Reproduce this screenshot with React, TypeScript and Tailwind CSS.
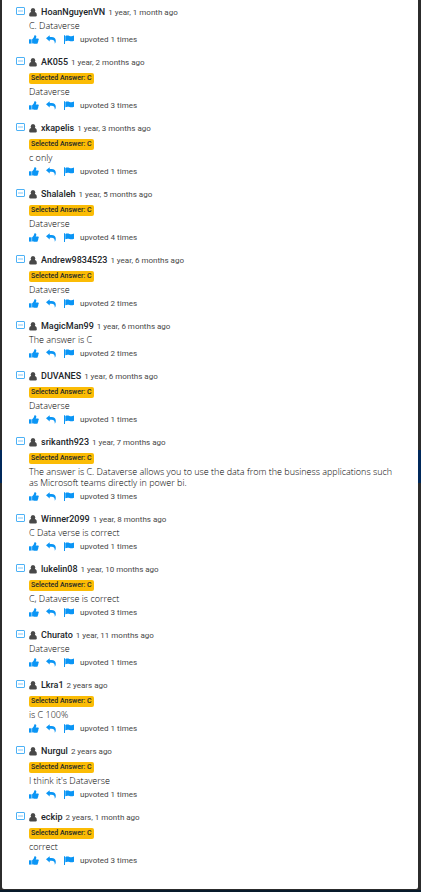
type Comment = {
  name: string;
  age: string;
  answer?: string;
  text: string;
  votes: number;
};

const comments: Comment[] = [
  { name: "HoanNguyenVN", age: "1 year, 1 month ago", text: "C. Dataverse", votes: 1 },
  { name: "AK055", age: "1 year, 2 months ago", answer: "C", text: "Dataverse", votes: 3 },
  { name: "xkapelis", age: "1 year, 3 months ago", answer: "C", text: "c only", votes: 1 },
  { name: "Shalaleh", age: "1 year, 5 months ago", answer: "C", text: "Dataverse", votes: 4 },
  { name: "Andrew9834523", age: "1 year, 6 months ago", answer: "C", text: "Dataverse", votes: 2 },
  { name: "MagicMan99", age: "1 year, 6 months ago", text: "The answer is C", votes: 2 },
  { name: "DUVANES", age: "1 year, 6 months ago", answer: "C", text: "Dataverse", votes: 1 },
  {
    name: "srikanth923",
    age: "1 year, 7 months ago",
    answer: "C",
    text: "The answer is C. Dataverse allows you to use the data from the business applications such as Microsoft teams directly in power bi.",
    votes: 3,
  },
  { name: "Winner2099", age: "1 year, 8 months ago", text: "C Data verse is correct", votes: 1 },
  { name: "lukelin08", age: "1 year, 10 months ago", answer: "C", text: "C, Dataverse is correct", votes: 3 },
  { name: "Churato", age: "1 year, 11 months ago", text: "Dataverse", votes: 1 },
  { name: "Lkra1", age: "2 years ago", answer: "C", text: "is C 100%", votes: 1 },
  { name: "Nurgul", age: "2 years ago", answer: "C", text: "I think it's Dataverse", votes: 1 },
  { name: "eckip", age: "2 years, 1 month ago", answer: "C", text: "correct", votes: 3 },
];

function CollapseIcon() {
  return (
    <svg viewBox="0 0 9 8" className="block h-2 w-[9px]" fill="none" stroke="currentColor">
      <rect x="0.5" y="0.5" width="8" height="7" rx="0.5" />
      <path d="M2 4h5" strokeOpacity="0.7" />
    </svg>
  );
}

function UserIcon() {
  return (
    <svg viewBox="0 0 8 9" className="mr-1 h-[9px] w-2" fill="currentColor">
      <ellipse cx="4" cy="2.5" rx="2.3" ry="2.5" />
      <path d="M2 4C.8 4.400.2 5.400.2 7.200c0 .8.4 1.200 1.100 1.200h5.400c.7 0 1.100-.4 1.100-1.200 0-1.800-.6-2.800-1.800-3.200z" />
    </svg>
  );
}

function ThumbIcon() {
  return (
    <svg viewBox="0 0 10 9" className="h-[9px] w-2.5" fill="currentColor">
      <path d="M0 4.300h2.600v4.300H0z" />
      <path d="M3.100 4.300C4 3.800 4.900 2.700 5.100 1.600 5.200.7 5.500.2 6.100.2c.9 0 1.300.8 1.200 1.700-.1.600-.4 1.100-.6 1.500h2c.7 0 1.100.5 1.100 1.100 0 .4-.2.700-.5.900.2.700 0 1.200-.4 1.500.1.900-.3 1.900-1.400 1.900H6c-1.200 0-2-.5-2.900-.6z" />
    </svg>
  );
}

function ReplyIcon() {
  return (
    <svg viewBox="0 0 10 9" className="h-[9px] w-2.5" fill="currentColor">
      <path d="M0 3.300 3.700.2v1.900h1.800c2.800 0 4.300 1.500 4.300 3.800 0 1-.4 2-1 2.800.1-2.500-.8-4-3.300-4H3.700v1.900z" />
    </svg>
  );
}

function FlagIcon() {
  return (
    <svg viewBox="0 0 10 9" className="h-[9px] w-2.5" fill="currentColor">
      <path d="M0 .3h1V9H0zM1.300 1c1.500-.8 2.900-.6 4.200-.1 1.400.5 2.900.4 4.500-.3v5.100c-1.500.8-3.100.8-4.500.3-1.300-.5-2.700-.5-4.200.2z" />
    </svg>
  );
}

function CommentItem({ comment }: { comment: Comment }) {
  return (
    <li className="flex items-start gap-1 pb-[9px]">
      <button type="button" aria-label="Collapse comment" className="mt-0.5 text-[#4db1f5]">
        <CollapseIcon />
      </button>
      <div className="min-w-0 flex-1">
        <div className="flex h-3.5 items-center text-[#484848]">
          <UserIcon />
          <span className="text-[9px] font-medium text-[#212529]">{comment.name}</span>
          <span className="ml-[3px] pt-px">{comment.age}</span>
        </div>
        {comment.answer && (
          <div className="mt-1 mb-px flex h-[11px]">
            <span className="rounded-xs bg-[#fbbc05] px-0.5 text-[7px] leading-[11px] font-medium text-[#212529]">
              Selected Answer: {comment.answer}
            </span>
          </div>
        )}
        <p className="py-px pr-2 font-['Open_Sans',sans-serif] text-[9px] leading-[11px] font-light text-black">
          {comment.text}
        </p>
        <div className="flex h-3.5 items-center text-[#0a95f5]">
          <button type="button" aria-label="Upvote"><ThumbIcon /></button>
          <button type="button" aria-label="Reply" className="ml-[7px]"><ReplyIcon /></button>
          <button type="button" aria-label="Report" className="ml-2"><FlagIcon /></button>
          <span className="ml-1.5 pt-px text-[#484848]">upvoted {comment.votes} times</span>
        </div>
      </div>
    </li>
  );
}

export default function App() {
  return (
    <div className="relative isolate min-h-screen border-b-2 border-[#081a2b] bg-[#2c2c2c] pr-[3px] pb-px pl-0.5">
      <div className="absolute inset-x-0 top-[450px] -z-10 h-[33px] bg-[#00285a]" />
      <main className="min-h-[889px] rounded-b-xs bg-white px-[14px] pt-[5px] font-[Roboto,sans-serif] text-[8px] leading-[14px]">
        <ul>
          {comments.map((comment) => (
            <CommentItem key={comment.name} comment={comment} />
          ))}
        </ul>
      </main>
    </div>
  );
}
